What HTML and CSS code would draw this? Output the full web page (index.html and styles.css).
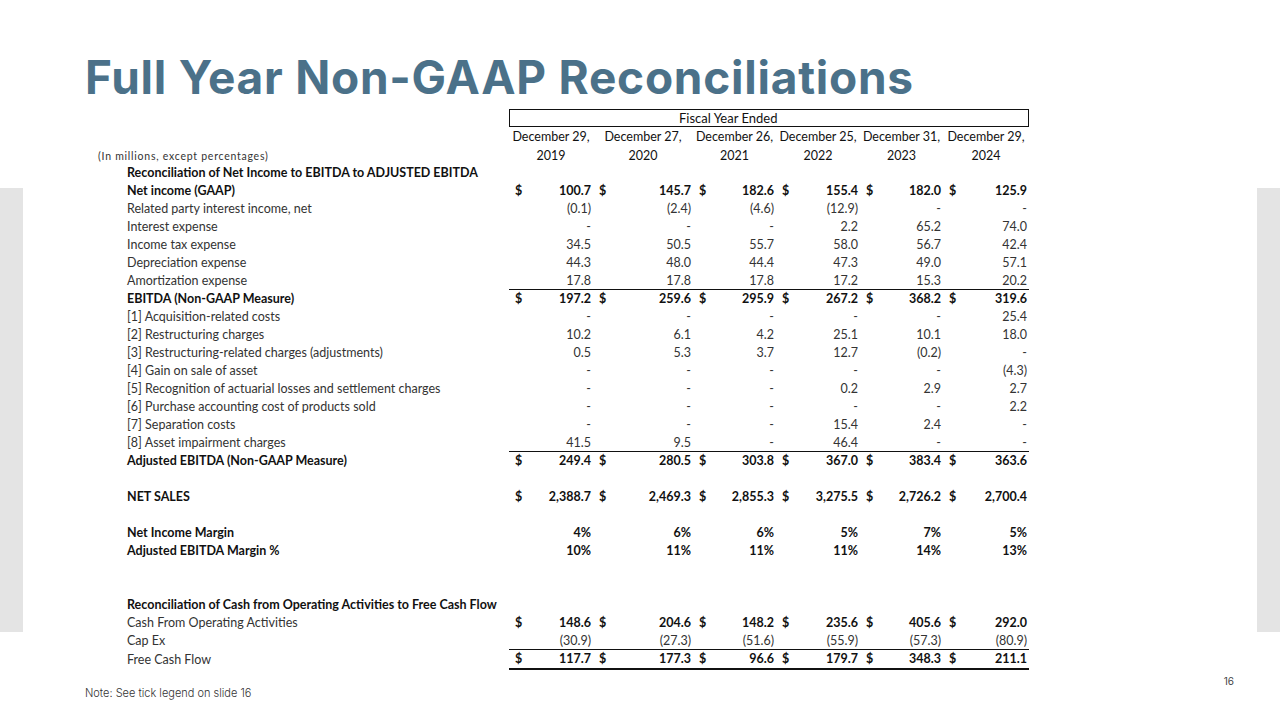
FILE: index.html
```html
<!DOCTYPE html>
<html>
<head>
<meta charset="utf-8">
<link rel="stylesheet" href="styles.css">
</head>
<body>
<div class="slide">
  <h1 class="title">Full Year Non-GAAP Reconciliations</h1>
  <div class="table">
    <div class="row hdr-box">
      <div class="sp"></div><div class="lbl"></div>
      <div class="box">Fiscal Year Ended</div>
    </div>
    <div class="row hdr">
      <div class="sp"></div><div class="lbl"></div>
      <div class="h">December 29,</div><div class="h">December 27,</div><div class="h">December 26,</div><div class="h">December 25,</div><div class="h">December 31,</div><div class="h">December 29,</div>
    </div>
    <div class="row hdr yr">
      <div class="units">(In millions, except percentages)</div>
      <div class="h">2019</div><div class="h">2020</div><div class="h">2021</div><div class="h">2022</div><div class="h">2023</div><div class="h">2024</div>
    </div>

    <div class="row b"><div class="sp"></div><div class="lbl">Reconciliation of Net Income to EBITDA to ADJUSTED EBITDA</div></div>
    <div class="row b"><div class="sp"></div><div class="lbl">Net income (GAAP)</div>
      <div class="d">$</div><div class="v">100.7</div><div class="d">$</div><div class="v">145.7</div><div class="d">$</div><div class="v">182.6</div><div class="d">$</div><div class="v">155.4</div><div class="d">$</div><div class="v">182.0</div><div class="d">$</div><div class="v">125.9</div></div>
    <div class="row"><div class="sp"></div><div class="lbl">Related party interest income, net</div>
      <div class="d"></div><div class="v">(0.1)</div><div class="d"></div><div class="v">(2.4)</div><div class="d"></div><div class="v">(4.6)</div><div class="d"></div><div class="v">(12.9)</div><div class="d"></div><div class="v">-</div><div class="d"></div><div class="v">-</div></div>
    <div class="row"><div class="sp"></div><div class="lbl">Interest expense</div>
      <div class="d"></div><div class="v">-</div><div class="d"></div><div class="v">-</div><div class="d"></div><div class="v">-</div><div class="d"></div><div class="v">2.2</div><div class="d"></div><div class="v">65.2</div><div class="d"></div><div class="v">74.0</div></div>
    <div class="row"><div class="sp"></div><div class="lbl">Income tax expense</div>
      <div class="d"></div><div class="v">34.5</div><div class="d"></div><div class="v">50.5</div><div class="d"></div><div class="v">55.7</div><div class="d"></div><div class="v">58.0</div><div class="d"></div><div class="v">56.7</div><div class="d"></div><div class="v">42.4</div></div>
    <div class="row"><div class="sp"></div><div class="lbl">Depreciation expense</div>
      <div class="d"></div><div class="v">44.3</div><div class="d"></div><div class="v">48.0</div><div class="d"></div><div class="v">44.4</div><div class="d"></div><div class="v">47.3</div><div class="d"></div><div class="v">49.0</div><div class="d"></div><div class="v">57.1</div></div>
    <div class="row ul"><div class="sp"></div><div class="lbl">Amortization expense</div>
      <div class="d"></div><div class="v">17.8</div><div class="d"></div><div class="v">17.8</div><div class="d"></div><div class="v">17.8</div><div class="d"></div><div class="v">17.2</div><div class="d"></div><div class="v">15.3</div><div class="d"></div><div class="v">20.2</div></div>
    <div class="row b"><div class="sp"></div><div class="lbl">EBITDA (Non-GAAP Measure)</div>
      <div class="d">$</div><div class="v">197.2</div><div class="d">$</div><div class="v">259.6</div><div class="d">$</div><div class="v">295.9</div><div class="d">$</div><div class="v">267.2</div><div class="d">$</div><div class="v">368.2</div><div class="d">$</div><div class="v">319.6</div></div>
    <div class="row"><div class="sp"></div><div class="lbl">[1] Acquisition-related costs</div>
      <div class="d"></div><div class="v">-</div><div class="d"></div><div class="v">-</div><div class="d"></div><div class="v">-</div><div class="d"></div><div class="v">-</div><div class="d"></div><div class="v">-</div><div class="d"></div><div class="v">25.4</div></div>
    <div class="row"><div class="sp"></div><div class="lbl">[2] Restructuring charges</div>
      <div class="d"></div><div class="v">10.2</div><div class="d"></div><div class="v">6.1</div><div class="d"></div><div class="v">4.2</div><div class="d"></div><div class="v">25.1</div><div class="d"></div><div class="v">10.1</div><div class="d"></div><div class="v">18.0</div></div>
    <div class="row"><div class="sp"></div><div class="lbl">[3] Restructuring-related charges (adjustments)</div>
      <div class="d"></div><div class="v">0.5</div><div class="d"></div><div class="v">5.3</div><div class="d"></div><div class="v">3.7</div><div class="d"></div><div class="v">12.7</div><div class="d"></div><div class="v">(0.2)</div><div class="d"></div><div class="v">-</div></div>
    <div class="row"><div class="sp"></div><div class="lbl">[4] Gain on sale of asset</div>
      <div class="d"></div><div class="v">-</div><div class="d"></div><div class="v">-</div><div class="d"></div><div class="v">-</div><div class="d"></div><div class="v">-</div><div class="d"></div><div class="v">-</div><div class="d"></div><div class="v">(4.3)</div></div>
    <div class="row"><div class="sp"></div><div class="lbl">[5] Recognition of actuarial losses and settlement charges</div>
      <div class="d"></div><div class="v">-</div><div class="d"></div><div class="v">-</div><div class="d"></div><div class="v">-</div><div class="d"></div><div class="v">0.2</div><div class="d"></div><div class="v">2.9</div><div class="d"></div><div class="v">2.7</div></div>
    <div class="row"><div class="sp"></div><div class="lbl">[6] Purchase accounting cost of products sold</div>
      <div class="d"></div><div class="v">-</div><div class="d"></div><div class="v">-</div><div class="d"></div><div class="v">-</div><div class="d"></div><div class="v">-</div><div class="d"></div><div class="v">-</div><div class="d"></div><div class="v">2.2</div></div>
    <div class="row"><div class="sp"></div><div class="lbl">[7] Separation costs</div>
      <div class="d"></div><div class="v">-</div><div class="d"></div><div class="v">-</div><div class="d"></div><div class="v">-</div><div class="d"></div><div class="v">15.4</div><div class="d"></div><div class="v">2.4</div><div class="d"></div><div class="v">-</div></div>
    <div class="row ul"><div class="sp"></div><div class="lbl">[8] Asset impairment charges</div>
      <div class="d"></div><div class="v">41.5</div><div class="d"></div><div class="v">9.5</div><div class="d"></div><div class="v">-</div><div class="d"></div><div class="v">46.4</div><div class="d"></div><div class="v">-</div><div class="d"></div><div class="v">-</div></div>
    <div class="row b"><div class="sp"></div><div class="lbl">Adjusted EBITDA (Non-GAAP Measure)</div>
      <div class="d">$</div><div class="v">249.4</div><div class="d">$</div><div class="v">280.5</div><div class="d">$</div><div class="v">303.8</div><div class="d">$</div><div class="v">367.0</div><div class="d">$</div><div class="v">383.4</div><div class="d">$</div><div class="v">363.6</div></div>
    <div class="row"></div>
    <div class="row b"><div class="sp"></div><div class="lbl">NET SALES</div>
      <div class="d">$</div><div class="v">2,388.7</div><div class="d">$</div><div class="v">2,469.3</div><div class="d">$</div><div class="v">2,855.3</div><div class="d">$</div><div class="v">3,275.5</div><div class="d">$</div><div class="v">2,726.2</div><div class="d">$</div><div class="v">2,700.4</div></div>
    <div class="row"></div>
    <div class="row b"><div class="sp"></div><div class="lbl">Net Income Margin</div>
      <div class="d"></div><div class="v">4%</div><div class="d"></div><div class="v">6%</div><div class="d"></div><div class="v">6%</div><div class="d"></div><div class="v">5%</div><div class="d"></div><div class="v">7%</div><div class="d"></div><div class="v">5%</div></div>
    <div class="row b"><div class="sp"></div><div class="lbl">Adjusted EBITDA Margin %</div>
      <div class="d"></div><div class="v">10%</div><div class="d"></div><div class="v">11%</div><div class="d"></div><div class="v">11%</div><div class="d"></div><div class="v">11%</div><div class="d"></div><div class="v">14%</div><div class="d"></div><div class="v">13%</div></div>
    <div class="row"></div>
    <div class="row"></div>
    <div class="row b"><div class="sp"></div><div class="lbl">Reconciliation of Cash from Operating Activities to Free Cash Flow</div></div>
    <div class="row"><div class="sp"></div><div class="lbl">Cash From Operating Activities</div>
      <div class="d bd">$</div><div class="v bd">148.6</div><div class="d bd">$</div><div class="v bd">204.6</div><div class="d bd">$</div><div class="v bd">148.2</div><div class="d bd">$</div><div class="v bd">235.6</div><div class="d bd">$</div><div class="v bd">405.6</div><div class="d bd">$</div><div class="v bd">292.0</div></div>
    <div class="row ul"><div class="sp"></div><div class="lbl">Cap Ex</div>
      <div class="d"></div><div class="v">(30.9)</div><div class="d"></div><div class="v">(27.3)</div><div class="d"></div><div class="v">(51.6)</div><div class="d"></div><div class="v">(55.9)</div><div class="d"></div><div class="v">(57.3)</div><div class="d"></div><div class="v">(80.9)</div></div>
    <div class="row ul2"><div class="sp"></div><div class="lbl">Free Cash Flow</div>
      <div class="d bd">$</div><div class="v bd">117.7</div><div class="d bd">$</div><div class="v bd">177.3</div><div class="d bd">$</div><div class="v bd">96.6</div><div class="d bd">$</div><div class="v bd">179.7</div><div class="d bd">$</div><div class="v bd">348.3</div><div class="d bd">$</div><div class="v bd">211.1</div></div>
  </div>
  <div class="footer">
    <div class="note">Note: See tick legend on slide 16</div>
    <div class="pgnum">16</div>
  </div>
</div>
</body>
</html>
```
FILE: styles.css
```css
* { box-sizing: border-box; }
html, body { margin: 0; padding: 0; background: #fff; }
.slide {
  width: 1280px;
  height: 720px;
  position: relative;
  overflow: hidden;
  padding: 0 0 0 85px;
  background:
    linear-gradient(#e4e4e4, #e4e4e4) 0 188px / 23px 444px no-repeat,
    linear-gradient(#e4e4e4, #e4e4e4) 1257px 188px / 23px 444px no-repeat,
    #fff;
}
.title {
  margin: 0;
  padding-top: 49px;
  height: 109px;
  font-family: "Inter", "Open Sans", sans-serif;
  font-weight: 700;
  font-size: 46px;
  line-height: 56px;
  color: #4b7189;
  letter-spacing: 0.75px;
}
.table {
  margin-left: 13px;
  width: 931px;
  font-family: "Lato", "Open Sans", sans-serif;
  font-size: 12.5px;
  color: #333;
}
.row {
  display: grid;
  grid-template-columns: 29px 382px 18px 66px 18px 82px 18px 65px 18px 66px 18px 65px 18px 68px;
  height: 18px;
  align-items: center;
  line-height: 18px;
}
.row > div { white-space: nowrap; }
.lbl { grid-column: 2; }
.b { color: #111; font-weight: 700; }
.bd { font-weight: 700; color: #111; }
.d { padding-left: 6px; }
.v { text-align: right; padding-right: 2px; }
.ul .d, .ul .v { border-bottom: 1px solid #111; height: 18px; }
.ul2 .d, .ul2 .v { border-bottom: 2px solid #111; height: 20px; line-height: 18px; align-self: start; }
.hdr-box .box {
  grid-column: 3 / 15;
  border: 1px solid #111;
  height: 18px;
  line-height: 16px;
  padding-left: 169px;
  color: #111;
  font-size: 13px;
}
.hdr { color: #111; }
.hdr .h { grid-column: span 2; text-align: center; }
.hdr .h:nth-of-type(1) { grid-column: 3 / 5; }
.hdr.yr { height: 18px; }
.row.hdr:not(.yr) { height: 19px; padding-top: 1px; }
.hdr.yr { padding-top: 1px; }
.units {
  grid-column: 1 / 3;
  font-size: 10.5px;
  letter-spacing: 0.75px;
  color: #333;
}
.footer {
  display: flex;
  justify-content: space-between;
  align-items: flex-start;
  margin-top: 7px;
  padding-right: 46px;
  font-family: "Inter", "Open Sans", sans-serif;
}
.note { font-size: 11px; font-weight: 300; color: #333; padding-top: 11px; }
.pgnum { font-size: 10px; color: #444; }
```
